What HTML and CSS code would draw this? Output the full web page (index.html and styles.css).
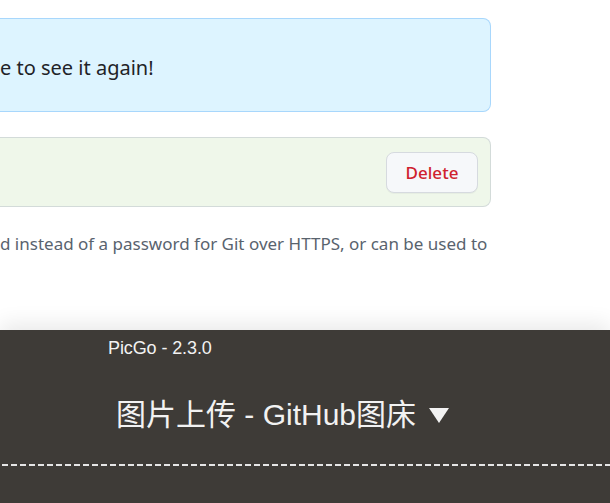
FILE: index.html
```html
<!DOCTYPE html>
<html lang="en">
<head>
<meta charset="utf-8">
<title>Tokens</title>
<link rel="stylesheet" href="styles.css">
</head>
<body>
<div class="page">
  <div class="content">
    <div class="flash">
      <p class="flash-text">e to see it again!</p>
    </div>
    <div class="token-row">
      <button class="btn-delete" type="button">Delete</button>
    </div>
    <p class="note">d instead of a password for Git over HTTPS, or can be used to</p>
  </div>
  <div class="picgo">
    <div class="picgo-version">PicGo - 2.3.0</div>
    <div class="picgo-title">图片上传 - GitHub图床 <span class="caret"></span></div>
    <div class="picgo-divider"></div>
  </div>
</div>
</body>
</html>
```

FILE: styles.css
```css
html, body {
  margin: 0;
  padding: 0;
  background: #ffffff;
}
body {
  width: 610px;
  height: 503px;
  overflow: hidden;
  font-family: "Noto Sans", "Liberation Sans", sans-serif;
}
.page {
  display: flex;
  flex-direction: column;
  height: 503px;
}
.content {
  width: 491px;
  flex: 1;
  display: flex;
  flex-direction: column;
  padding-top: 18px;
  box-sizing: border-box;
}
.flash {
  height: 94px;
  box-sizing: border-box;
  border: 1px solid #a8d7fc;
  border-left: none;
  border-radius: 0 8px 8px 0;
  background: #ddf4ff;
  display: flex;
  align-items: center;
  color: #1f2328;
}
.flash-text {
  margin: 4px 0 0 0;
  font-size: 20px;
  white-space: nowrap;
}
.token-row {
  margin-top: 25px;
  height: 70px;
  box-sizing: border-box;
  border: 1px solid #d3dbd9;
  border-left: none;
  border-radius: 0 8px 8px 0;
  background: #eff7ea;
  display: flex;
  align-items: center;
  justify-content: flex-end;
  padding-right: 12px;
}
.btn-delete {
  width: 92px;
  height: 41px;
  border: 1px solid #d6dadf;
  border-radius: 8px;
  background: #f6f8fa;
  color: #cf222e;
  font-family: "Noto Sans", "Liberation Sans", sans-serif;
  font-size: 17px;
  font-weight: 500;
  box-shadow: 0 1px 0 rgba(31, 35, 40, 0.04);
}
.note {
  margin: 25px 0 0 0;
  white-space: nowrap;
  font-size: 17px;
  color: #59636e;
}
.picgo {
  height: 173px;
  flex-shrink: 0;
  background: #3e3b37;
  box-shadow: 0 -6px 20px rgba(0, 0, 0, 0.09);
  color: #f2f2f2;
  font-family: "Liberation Sans", Arial, "Noto Sans CJK SC", sans-serif;
  display: flex;
  flex-direction: column;
}
.picgo-version {
  margin: 7px 0 0 108px;
  font-size: 18px;
  letter-spacing: -0.1px;
  line-height: 22px;
}
.picgo-title {
  margin: 39px 0 0 116px;
  font-size: 30px;
  line-height: 34px;
  display: flex;
  align-items: center;
}
.caret {
  width: 0;
  height: 0;
  margin-left: 13px;
  border-left: 10px solid transparent;
  border-right: 10px solid transparent;
  border-top: 15px solid #f2f2f2;
}
.picgo-divider {
  margin-top: 32px;
  height: 2px;
  background: repeating-linear-gradient(90deg, transparent 0, transparent 2px, #e6e6e6 2px, #e6e6e6 8px, transparent 8px, transparent 9px);
}
```
